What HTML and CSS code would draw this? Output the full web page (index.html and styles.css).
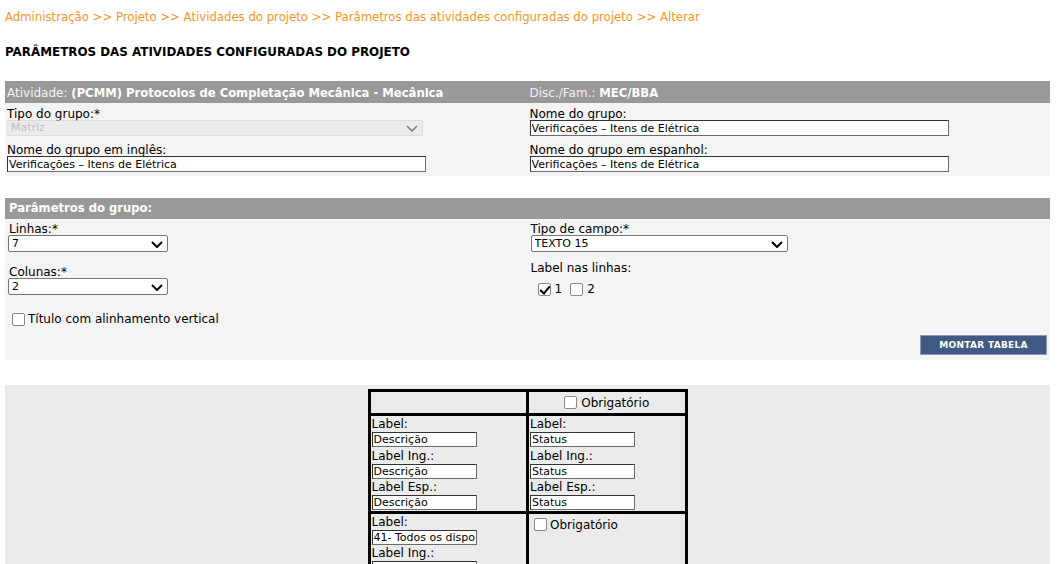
FILE: index.html
```html
<!DOCTYPE html>
<html lang="pt-BR">
<head>
<meta charset="utf-8">
<title>Parâmetros das atividades configuradas do projeto</title>
<link rel="stylesheet" href="styles.css">
</head>
<body>
<div class="page">
  <nav class="breadcrumb">Administração &gt;&gt; Projeto &gt;&gt; Atividades do projeto &gt;&gt; Parâmetros das atividades configuradas do projeto &gt;&gt; Alterar</nav>
  <h1 class="title">PARÂMETROS DAS ATIVIDADES CONFIGURADAS DO PROJETO</h1>

  <section class="card card-info">
    <div class="card-head two">
      <div class="head-cell"><span class="head-key">Atividade:</span> <b>(PCMM) Protocolos de Completação Mecânica - Mecânica</b></div>
      <div class="head-cell"><span class="head-key">Disc./Fam.:</span> <b>MEC/BBA</b></div>
    </div>
    <div class="card-body two">
      <div class="col">
        <label class="lbl">Tipo do grupo:*</label>
        <span class="select-wrap sel-wide disabled first">
          <select class="select" disabled><option>Matriz</option></select>
          <svg class="chev" viewBox="0 0 12 7" width="12" height="7"><path d="M1 1 L6 6 L11 1" fill="none" stroke="currentColor" stroke-width="1.6"/></svg>
        </span>
        <label class="lbl">Nome do grupo em inglês:</label>
        <input class="text text-wide" type="text" value="Verificações – Itens de Elétrica">
      </div>
      <div class="col">
        <label class="lbl">Nome do grupo:</label>
        <input class="text text-wide first" type="text" value="Verificações – Itens de Elétrica">
        <label class="lbl">Nome do grupo em espanhol:</label>
        <input class="text text-wide" type="text" value="Verificações – Itens de Elétrica">
      </div>
    </div>
  </section>

  <section class="card card-params">
    <div class="card-head"><div class="head-cell pad4"><b>Parâmetros do grupo:</b></div></div>
    <div class="params">
      <div class="two">
        <div class="col pcol-left">
          <label class="lbl">Linhas:*</label>
          <span class="select-wrap sel-small">
            <select class="select"><option>7</option></select>
            <svg class="chev" viewBox="0 0 12 7" width="12" height="7"><path d="M1 1 L6 6 L11 1" fill="none" stroke="currentColor" stroke-width="2"/></svg>
          </span>
          <label class="lbl lbl-gap">Colunas:*</label>
          <span class="select-wrap sel-small">
            <select class="select"><option>2</option></select>
            <svg class="chev" viewBox="0 0 12 7" width="12" height="7"><path d="M1 1 L6 6 L11 1" fill="none" stroke="currentColor" stroke-width="2"/></svg>
          </span>
          <label class="check-row vertical"><input type="checkbox" class="cb"> Título com alinhamento vertical</label>
        </div>
        <div class="col pcol-right">
          <label class="lbl">Tipo de campo:*</label>
          <span class="select-wrap sel-mid">
            <select class="select"><option>TEXTO 15</option></select>
            <svg class="chev" viewBox="0 0 12 7" width="12" height="7"><path d="M1 1 L6 6 L11 1" fill="none" stroke="currentColor" stroke-width="2"/></svg>
          </span>
          <label class="lbl lbl-gap2">Label nas linhas:</label>
          <div class="checks">
            <label class="check-row"><input type="checkbox" class="cb" checked>1</label>
            <label class="check-row"><input type="checkbox" class="cb">2</label>
          </div>
        </div>
      </div>
      <div class="actions"><button class="btn" type="button">MONTAR TABELA</button></div>
    </div>
  </section>

  <section class="card card-table">
    <table class="grid">
      <tr>
        <td class="empty"></td>
        <td class="center"><label class="check-row"><input type="checkbox" class="cb"> Obrigatório</label></td>
      </tr>
      <tr>
        <td>
          <div class="cl">Label:</div><input class="text tiny" type="text" value="Descrição">
          <div class="cl">Label Ing.:</div><input class="text tiny" type="text" value="Descrição">
          <div class="cl">Label Esp.:</div><input class="text tiny" type="text" value="Descrição">
        </td>
        <td>
          <div class="cl">Label:</div><input class="text tiny" type="text" value="Status">
          <div class="cl">Label Ing.:</div><input class="text tiny" type="text" value="Status">
          <div class="cl">Label Esp.:</div><input class="text tiny" type="text" value="Status">
        </td>
      </tr>
      <tr>
        <td>
          <div class="cl">Label:</div><input class="text tiny" type="text" value="41- Todos os dispositivos">
          <div class="cl">Label Ing.:</div><input class="text tiny" type="text" value="41- All devices">
          <div class="cl">Label Esp.:</div><input class="text tiny" type="text" value="41- Todos los dispositivos">
        </td>
        <td class="top"><label class="check-row"><input type="checkbox" class="cb"> Obrigatório</label></td>
      </tr>
      <tr>
        <td>
          <div class="cl">Label:</div><input class="text tiny" type="text" value="42- Cabos">
          <div class="cl">Label Ing.:</div><input class="text tiny" type="text" value="42- Cables">
          <div class="cl">Label Esp.:</div><input class="text tiny" type="text" value="42- Cables">
        </td>
        <td class="top"><label class="check-row"><input type="checkbox" class="cb"> Obrigatório</label></td>
      </tr>
    </table>
  </section>
</div>
</body>
</html>
```
FILE: styles.css
```css
* { box-sizing: border-box; }
html, body { margin: 0; padding: 0; background: #fff; }
body {
  font-family: "DejaVu Sans", Verdana, sans-serif;
  font-size: 11px;
  color: #000;
}
.page { width: 1045px; margin-left: 5px; }

.breadcrumb {
  color: #f7941d;
  font-size: 11.7px;
  line-height: 14px;
  padding-top: 10px;
}
.title {
  font-size: 11.9px;
  font-weight: bold;
  line-height: 14px;
  margin: 21px 0 0 0;
}

.card { background: #f4f4f4; }
.card-info { margin-top: 22px; padding-bottom: 4px; }
.card-params { margin-top: 22px; }
.card-table { margin-top: 25px; background: #ebebeb; padding-top: 4px; height: 200px; }

.two { display: grid; grid-template-columns: 1fr 1fr; }
.card-head { background: #999; color: #fff; height: 22px; font-size: 12px; }
.card-params .card-head { height: 21px; }
.head-cell { padding: 2px 0 0 2px; line-height: 20px; white-space: nowrap; }
.card-params .head-cell { padding-top: 0; }
.head-cell.pad4 { padding-left: 4px; }
.head-key { color: #f2f2f2; }
.head-cell b { font-weight: bold; font-size: 11.6px; }

.card-body { padding-top: 3px; }
.col { padding: 0 2px; display: flex; flex-direction: column; align-items: flex-start; }
.lbl { display: block; font-size: 12px; line-height: 12px; padding-top: 2px; }
.first { margin-bottom: 6px; }

.text {
  font-family: "DejaVu Sans", Verdana, sans-serif;
  font-size: 11px;
  height: 16px;
  border: 1px solid #6b6b6b;
  border-top-color: #333;
  border-left-color: #333;
  padding: 0 1px;
  background: #fff;
  color: #000;
  border-radius: 0;
  outline: none;
}
.text-wide { width: 419px; }

.select-wrap { position: relative; display: inline-block; color: #000; }
.select {
  appearance: none;
  -webkit-appearance: none;
  font-family: "DejaVu Sans", Verdana, sans-serif;
  font-size: 11px;
  width: 100%;
  height: 100%;
  border: 1px solid #767676;
  border-radius: 2px;
  background: #fff;
  color: #000;
  padding: 0 3px;
  line-height: 14px;
}
.sel-wide { width: 416px; height: 16px; }
.sel-small { width: 160px; height: 17px; }
.sel-mid { width: 257px; height: 17px; }
.disabled { color: #808080; }
.disabled .select { background: #e8e8e8; border-color: #d2d2d2; color: #a8a8a8; }
.chev { position: absolute; right: 5px; top: 50%; margin-top: -3px; pointer-events: none; }

.params { padding: 2px 3px 5px 0; }
.pcol-left { padding: 0 0 0 3px; }
.pcol-left .lbl { padding-left: 1px; }
.pcol-right { padding: 0 0 0 4.5px; }
.lbl-gap { margin-top: 12px; }
.lbl-gap2 { margin-top: 8px; }

.check-row { display: inline-flex; align-items: center; font-size: 12px; line-height: 14px; }
.cb {
  appearance: none;
  -webkit-appearance: none;
  width: 13px;
  height: 13px;
  margin: 0 3px 0 0;
  border: 1px solid #8a8a8a;
  border-radius: 2px;
  background: #fff;
  position: relative;
  flex: none;
}
.cb:checked::after {
  content: "";
  position: absolute;
  left: 3px;
  top: 0px;
  width: 4px;
  height: 8px;
  border: solid #000;
  border-width: 0 2px 2px 0;
  transform: rotate(40deg);
}
.vertical { margin: 17px 0 0 4px; }
.checks { display: flex; gap: 8px; margin: 8px 0 0 7px; }
.checks .cb { margin-right: 4px; }

.actions { display: flex; justify-content: flex-end; margin-top: 9px; }
.btn {
  font-family: "DejaVu Sans", Verdana, sans-serif;
  font-size: 9px;
  font-weight: bold;
  letter-spacing: 0.3px;
  color: #fff;
  background: #405a84;
  border: 1px solid #8c9bb5;
  width: 127px;
  height: 20px;
  padding: 0;
}

.grid {
  border-collapse: collapse;
  margin: 0 auto;
  width: 320px;
  border: 3px solid #000;
}
.grid td {
  border: 3px solid #000;
  width: 50%;
  padding: 0 1px;
  vertical-align: top;
  font-size: 12px;
}
.grid td.empty { height: 24px; }
.grid td.center { text-align: center; vertical-align: middle; }
.grid td.center .check-row { padding-top: 3px; }
.grid td.center .cb { margin-right: 4px; }
.grid td.top { padding: 4px 5px; }
.cl { font-size: 12px; line-height: 16px; }
.text.tiny { width: 105px; height: 15px; display: block; margin-bottom: 0.5px; }
```
